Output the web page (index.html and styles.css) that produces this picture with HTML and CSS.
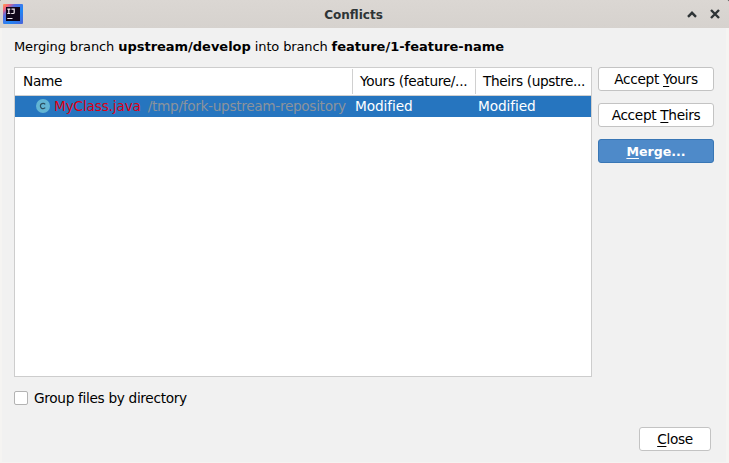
FILE: index.html
```html
<!DOCTYPE html>
<html lang="en">
<head>
<meta charset="utf-8">
<title>Conflicts</title>
<link rel="stylesheet" href="styles.css">
</head>
<body>
<div class="window">
  <header class="titlebar">
    <svg class="logo" width="20" height="20" viewBox="0 0 20 20">
      <defs>
        <linearGradient id="edge" x1="0" y1="0" x2="1" y2="1">
          <stop offset="0" stop-color="#ffa04c"/>
          <stop offset=".16" stop-color="#f5617c"/>
          <stop offset=".32" stop-color="#5a6ee0"/>
          <stop offset=".62" stop-color="#1f86f5"/>
          <stop offset="1" stop-color="#4a62d8"/>
        </linearGradient>
      </defs>
      <rect width="20" height="20" rx="1" fill="url(#edge)"/>
      <rect x="3" y="3" width="14" height="14" fill="#10061a"/>
      <path d="M4.300 5.200h3M5.800 5.200v4.300M4.300 9.500h3M8.500 5.200h2.700v3.300q0 1-1 1H8.200M4.300 14.500h5.200" fill="none" stroke="#f1e9f1" stroke-width="1.200"/>
    </svg>
    <h1 class="title">Conflicts</h1>
    <div class="controls">
      <svg width="10" height="10" viewBox="0 0 10 10"><path d="M1 7.800l4-4 4 4" class="glyph"/></svg>
      <svg width="10" height="10" viewBox="0 0 10 10"><path d="M1 1l8 8M9 1l-8 8" class="glyph"/></svg>
    </div>
  </header>
  <main class="content">
    <p class="message">Merging branch <b>upstream/develop</b> into branch <b>feature/1-feature-name</b></p>
    <div class="body">
      <div class="table">
        <div class="row head">
          <span class="cell">Name</span>
          <span class="cell">Yours (feature/...</span>
          <span class="cell">Theirs (upstre...</span>
        </div>
        <div class="row selected">
          <span class="cell file">
            <svg class="class-icon" width="14" height="14" viewBox="0 0 14 14"><circle cx="7" cy="7" r="7" fill="#62b5d4"/><path d="M9.200 5.300A2.700 2.700 0 1 0 9.200 8.700" fill="none" stroke="#2c4f60" stroke-width="1.200"/></svg>
            <span class="name">MyClass.java</span>
            <span class="path">/tmp/fork-upstream-repository</span>
          </span>
          <span class="cell">Modified</span>
          <span class="cell">Modified</span>
        </div>
      </div>
      <div class="actions">
        <button class="button">Accept <u>Y</u>ours</button>
        <button class="button">Accept <u>T</u>heirs</button>
        <button class="button primary"><u>M</u>erge...</button>
      </div>
    </div>
    <label class="group"><span class="check"></span><span>Group files by directory</span></label>
    <footer class="footer"><button class="button close"><u>C</u>lose</button></footer>
  </main>
</div>
</body>
</html>
```
FILE: styles.css
```css
* { box-sizing: border-box; }
body {
  margin: 0;
  font: 13.700px/20px "DejaVu Sans", sans-serif;
  letter-spacing: -.33px;
  color: #000;
  background: #555;
}
.window {
  display: flex;
  flex-direction: column;
  width: 729px;
  height: 463px;
  overflow: hidden;
  background: #f5f4f2;
  border-radius: 2px 3px 0 0;
}
.titlebar {
  display: grid;
  grid-template-columns: 40px 1fr 56px;
  align-items: center;
  height: 28px;
  padding: 0 9px 0 3px;
  background: linear-gradient(#dbd7d3, #d6d2ce);
}
.logo { display: block; }
.title {
  margin: 0;
  padding-top: 1px;
  font-size: 12px;
  font-weight: bold;
  letter-spacing: 0;
  text-align: center;
  color: #2e3436;
}
.controls { display: flex; justify-content: flex-end; gap: 13px; }
.controls svg { display: block; }
.glyph { fill: none; stroke: #2e3436; stroke-width: 2.400; }
.content {
  flex: 1;
  margin: 0 3px 1px 2px;
  padding: 9px 12px 11px;
  background: #f1f1f1;
}
.message { margin: 0 0 10px; white-space: pre; font-size: 13px; letter-spacing: -.13px; }
.message b { letter-spacing: -.02px; }
.body { display: flex; gap: 6px; height: 310px; }
.table { width: 578px; border: 1px solid #cdcdcd; background: #fff; }
.row {
  display: grid;
  grid-template-columns: 338px 123px 115px;
  white-space: nowrap;
}
.head { height: 28px; padding: 1px 0; border-bottom: 1px solid #d0d0d0; }
.head .cell { padding: 2px 0 0 7px; border-left: 1px solid #d0d0d0; }
.head .cell:first-child { border-left: 0; padding-left: 8px; }
.head .cell:not(:first-child) { margin-left: -1px; }
.head .cell:last-child { letter-spacing: -.38px; }
.selected { height: 21px; line-height: 20px; background: #2675bf; color: #fff; }
.selected .cell { padding-left: 2px; letter-spacing: -.1px; }
.selected .file { display: flex; align-items: flex-start; padding-left: 21px; }
.class-icon { flex: none; margin: 3px 4px 0 0; }
.name { color: #dc0014; margin-right: 7px; letter-spacing: -.18px; }
.path { color: #8b939c; letter-spacing: -.34px; }
.actions { display: flex; flex-direction: column; gap: 12px; width: 116px; }
.button {
  height: 24px;
  padding: 0;
  font: inherit;
  letter-spacing: inherit;
  line-height: 22px;
  color: #000;
  background: #fff;
  border: 1px solid #c3c3c3;
  border-radius: 3px;
}
.button u { text-decoration-thickness: 1px; text-underline-offset: 2px; text-decoration-skip-ink: none; }
.primary { padding-top: 1px; color: #fff; font-size: 12.600px; font-weight: bold; letter-spacing: 0; background: #4e8ac9; border-color: #3876b5; }
.group { display: flex; align-items: center; gap: 6px; margin-top: 11px; height: 20px; }
.check { width: 14px; height: 14px; background: #fff; border: 1px solid #b3b3b3; border-radius: 2px; }
.footer { display: flex; justify-content: flex-end; margin-top: 19px; padding-right: 3px; }
.close { width: 72px; }
```
